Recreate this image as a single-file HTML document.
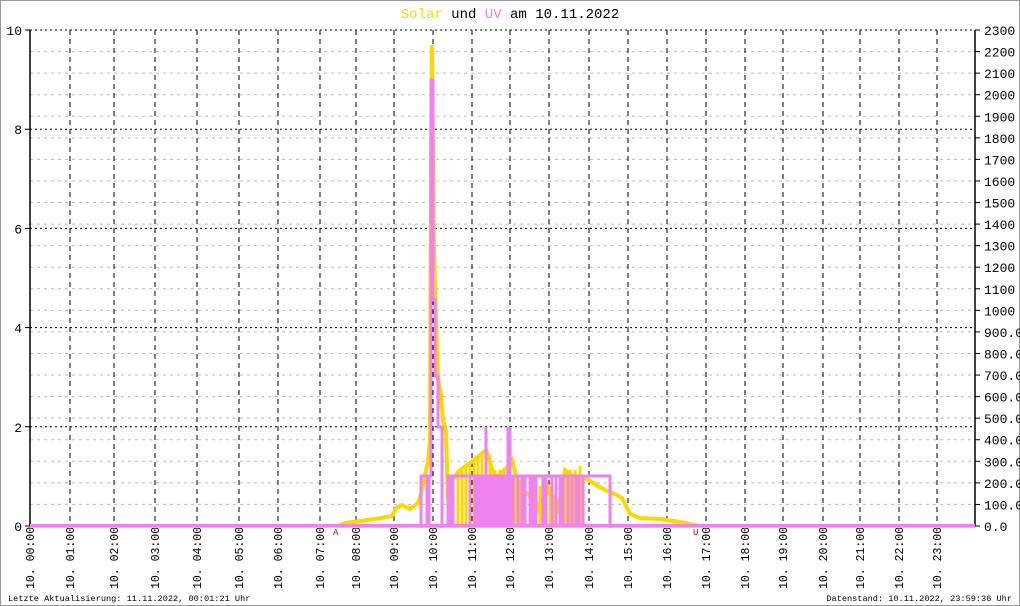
<!DOCTYPE html>
<html><head><meta charset="utf-8"><style>
html,body{margin:0;padding:0;background:#fff}
svg{display:block}
text{font-family:"Liberation Mono","DejaVu Sans Mono",monospace}
</style></head><body>
<svg id="s" width="1020" height="606" viewBox="0 0 1020 606" xmlns="http://www.w3.org/2000/svg">
<rect x="0.5" y="0.5" width="1019" height="605" fill="#fff" stroke="#999" stroke-width="1"/>
<g id="grid"></g>
<text x="510" y="18" text-anchor="middle" font-size="14"><tspan fill="#FFD700">Solar</tspan> und <tspan fill="#EE82EE">UV</tspan> am 10.11.2022</text>
<!-- solar -->
<polyline fill="none" stroke="#FFD700" stroke-width="4" points="30,526 338,526 345,523 360,521 375,519 392,516 396,508 402,505 410,509 418,503 422,490 425,474 428,462 430,440 431,160 432,45 434,250 436,320 438,378 441,395 443,420 446,432 448,500 452,480 460,470 470,463 480,455 486,450 490,462 495,478 505,470 512,460 518,482 525,492 535,500 540,512 548,488 552,500 558,510 565,470 575,478 585,478 595,484 605,490 615,494 622,498 630,514 640,518 660,519 680,522 700,526 975,526"/>
<path fill="none" stroke="#FFD700" stroke-width="3" d="M458,526V470M462,526V468M466,526V466M470,526V462M474,526V460M478,526V456M482,526V452M486,526V450M490,526V455M495,526V470M500,526V470M504,526V468M515,526V470M520,526V480M525,526V484M530,526V480M535,526V488M540,526V486M545,526V480M550,526V486M555,526V495M560,526V490M565,526V468M570,526V470M575,526V470M580,526V466"/>
<!-- UV -->
<g fill="none" stroke="#EE82EE" stroke-width="3">
<polyline points="30,526 421,526 421,476 427,476 427,526 429,526 429,476 431,476 431,80 433,80 433,300 435,300 435,376 438,376 438,427 442,427 442,526 448,526 448,476 610,476 610,526 975,526"/>
<path d="M450,526V476M453,526V476M470,526V476M475,526V476M478,526V476M481,526V476M484,526V476M486,526V427M488,526V476M491,526V476M494,526V476M497,526V476M500,526V476M503,526V476M506,526V476M508,526V427M510,526V427M513,526V476M518,526V476M522,526V476M525,526V476M530,526V476M533,526V476M536,526V476M543,526V476M546,526V476M552,526V476M556,526V476M560,526V476M563,526V476M568,526V476M572,526V476M576,526V476M579,526V476M583,526V476"/>
</g>
<line x1="30" y1="525.5" x2="975" y2="525.5" stroke="#EE82EE" stroke-width="3"/>
<line x1="30" y1="527.5" x2="975" y2="527.5" stroke="#FFD700" stroke-width="1"/>
<text x="333" y="535" font-size="9" fill="#c00">A</text>
<text x="693" y="535" font-size="9" fill="#c00">U</text>
<text x="8" y="601" font-size="8.6">Letzte Aktualisierung: 11.11.2022, 00:01:21 Uhr</text>
<text x="1012" y="601" font-size="8.6" text-anchor="end">Datenstand: 10.11.2022, 23:59:36 Uhr</text>
</svg>
<script>
var g=document.getElementById('grid'),h='';
var y0=526,y1=30,L=30,R=975;
var xs=[30,70,114,155,197,239,278,320,356,394,433,472,510,549,589,628,667,706,745,783,823,860,899,937];
for(var i=1;i<23;i++){var y=y0-(y0-y1)*i/23;h+='<line x1="'+L+'" x2="'+R+'" y1="'+y+'" y2="'+y+'" stroke="#bbb" stroke-dasharray="3,4"/>';}
for(var v=2;v<=10;v+=2){var y=y0-(y0-y1)*v/10;h+='<line x1="'+L+'" x2="'+R+'" y1="'+y+'" y2="'+y+'" stroke="#000" stroke-dasharray="2,3"/>';
h+='<line x1="'+(L-5)+'" x2="'+L+'" y1="'+y+'" y2="'+y+'" stroke="#000"/><text x="'+(L-8)+'" y="'+(y+5)+'" font-size="13" text-anchor="end">'+v+'</text>';}
h+='<line x1="'+(L-5)+'" x2="'+L+'" y1="'+y0+'" y2="'+y0+'" stroke="#000"/><text x="'+(L-8)+'" y="'+(y0+5)+'" font-size="13" text-anchor="end">0</text>';
for(var i=1;i<24;i++){var x=xs[i];h+='<line x1="'+x+'" x2="'+x+'" y1="'+y1+'" y2="'+y0+'" stroke="#000" stroke-dasharray="5,4"/>';}
for(var i=0;i<24;i++){var x=xs[i]+4;var t='10. '+(i<10?'0':'')+i+':00';h+='<text transform="translate('+x+',589) rotate(-90)" font-size="11.5">'+t+'</text>';}
for(var i=0;i<=23;i++){var y=y0-(y0-y1)*i/23;var t=i*100;t=(i<10)?t+'.0':''+t;h+='<line x1="'+R+'" x2="'+(R+5)+'" y1="'+y+'" y2="'+y+'" stroke="#000"/><text x="'+(R+9)+'" y="'+(y+5)+'" font-size="13">'+t+'</text>';}
h+='<line x1="'+L+'" x2="'+L+'" y1="'+y1+'" y2="'+y0+'" stroke="#000" stroke-width="1.5"/><line x1="'+R+'" x2="'+R+'" y1="'+y1+'" y2="'+y0+'" stroke="#000" stroke-width="1.5"/>';
g.innerHTML=h;
</script>
</body></html>
